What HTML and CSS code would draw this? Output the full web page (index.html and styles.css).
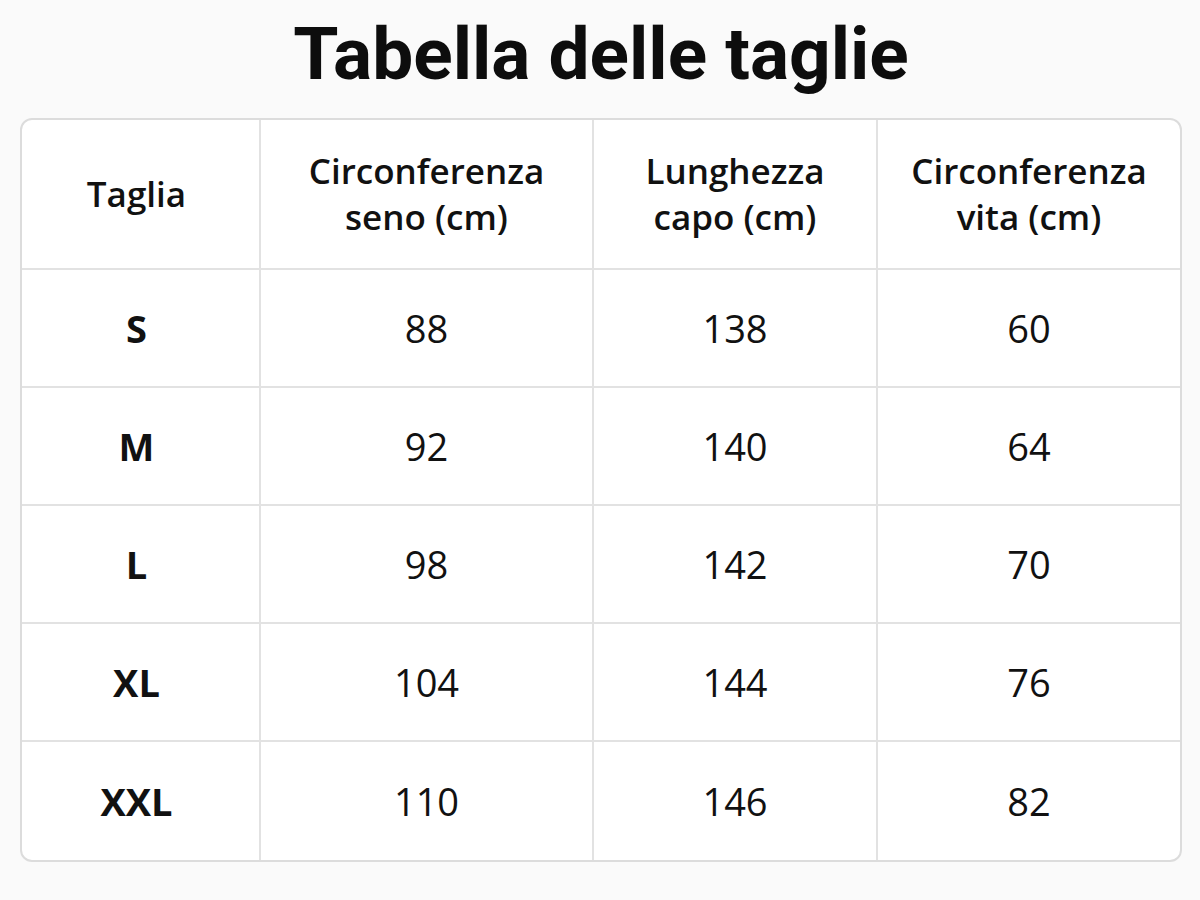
FILE: index.html
```html
<!DOCTYPE html>
<html lang="it">
<head>
<meta charset="utf-8">
<title>Tabella delle taglie</title>
<link rel="stylesheet" href="styles.css">
</head>
<body>
<main class="page">
  <h1 class="title">Tabella delle taglie</h1>
  <div class="table">
    <div class="cell head first">Taglia</div>
    <div class="cell head">Circonferenza<br>seno (cm)</div>
    <div class="cell head">Lunghezza<br>capo (cm)</div>
    <div class="cell head">Circonferenza<br>vita (cm)</div>

    <div class="cell size first">S</div><div class="cell">88</div><div class="cell">138</div><div class="cell">60</div>
    <div class="cell size first">M</div><div class="cell">92</div><div class="cell">140</div><div class="cell">64</div>
    <div class="cell size first">L</div><div class="cell">98</div><div class="cell">142</div><div class="cell">70</div>
    <div class="cell size first">XL</div><div class="cell">104</div><div class="cell">144</div><div class="cell">76</div>
    <div class="cell size first">XXL</div><div class="cell">110</div><div class="cell">146</div><div class="cell">82</div>
  </div>
</main>
</body>
</html>
```

FILE: styles.css
```css
html, body {
  margin: 0;
  padding: 0;
  background: #fafafa;
}
body {
  font-family: "Open Sans", "Noto Sans", sans-serif;
  color: #111;
}
.page {
  width: 1200px;
  height: 900px;
  box-sizing: border-box;
  padding: 12px 18px 0 20px;
  display: flex;
  flex-direction: column;
  align-items: stretch;
}
.title {
  margin: 0;
  height: 106px;
  text-align: center;
  font-family: Roboto, "Open Sans", sans-serif;
  font-size: 73px;
  font-weight: 700;
  line-height: 84px;
  color: #0d0d0d;
}
.table {
  display: grid;
  grid-template-columns: 239px 333px 284px 1fr;
  grid-template-rows: 150px repeat(5, 118px);
  background: #fff;
  border: 2px solid #dcdcdc;
  border-radius: 12px;
  overflow: hidden;
}
.cell {
  display: flex;
  align-items: center;
  justify-content: center;
  text-align: center;
  font-size: 38px;
  font-weight: 400;
  color: #111;
  border-right: 2px solid #e2e2e2;
  border-bottom: 2px solid #e2e2e2;
}
.cell:nth-child(4n) {
  border-right: none;
}
.cell:nth-last-child(-n+4) {
  border-bottom: none;
}
.first {
  padding-right: 8px;
}
.head {
  font-size: 35px;
  font-weight: 600;
  line-height: 46px;
}
.size {
  font-weight: 700;
  font-size: 38px;
}
```
